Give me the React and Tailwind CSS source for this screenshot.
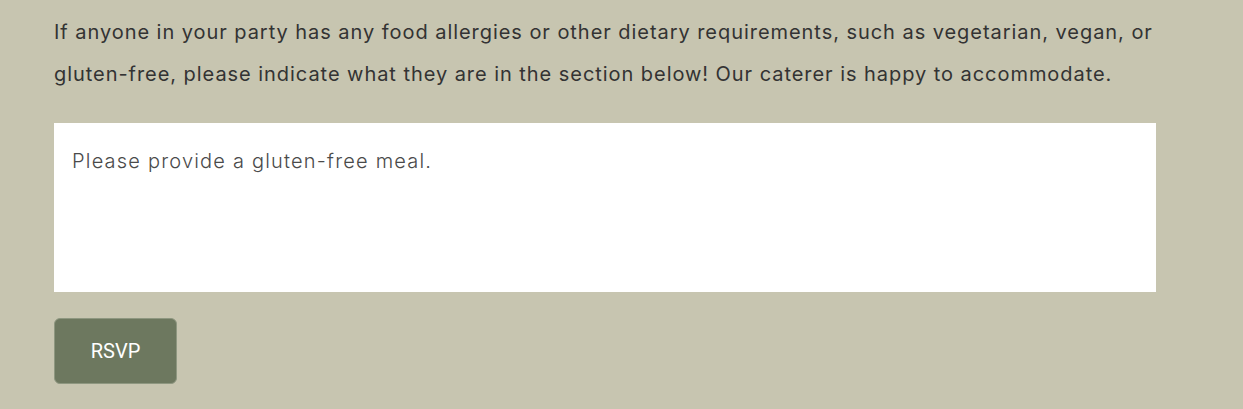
export default function App() {
  return (
    <div className="min-h-[409px] w-full bg-[#c7c5b0] px-[54px] pt-[11px]">
      <div className="w-[1102px]">
        <p className="font-['Inter',sans-serif] text-[20px] leading-[42px] tracking-[0.95px] text-[#333333]">
          If anyone in your party has any food allergies or other dietary requirements, such as vegetarian, vegan, or gluten-free, please indicate what they are in the section below! Our caterer is happy to accommodate.
        </p>
        <textarea
          defaultValue="Please provide a gluten-free meal."
          className="mt-[28px] block h-[169px] w-full resize-none bg-white px-[18px] py-[24px] font-['Inter',sans-serif] text-[20px] font-light leading-[28px] tracking-[1.2px] text-[#4a4a4a] outline-none"
        />
        <button className="mt-[26px] flex h-[66px] w-[123px] items-center justify-center rounded-[6px] border border-[#8e9780] bg-[#6d785f] font-['Roboto',sans-serif] text-[20px] text-white">
          RSVP
        </button>
      </div>
    </div>
  );
}
